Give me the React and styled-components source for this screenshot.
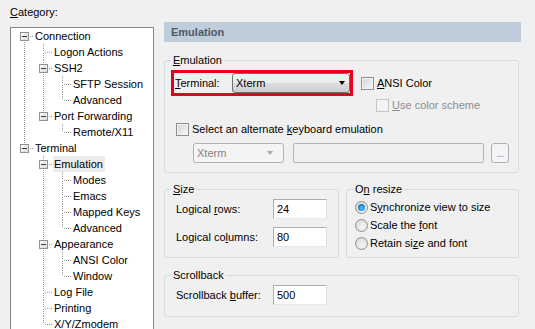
import React from "react";
import styled, { createGlobalStyle, css } from "styled-components";

const GlobalStyle = createGlobalStyle`
  html, body { margin: 0; padding: 0; }
  body {
    background: #f0f0f0;
    font-family: "Liberation Sans", Arial, sans-serif;
    font-size: 11px;
    color: #000;
    overflow: hidden;
  }
`;

const TREE = [
  { label: "Connection", level: 0, exp: true },
  { label: "Logon Actions", level: 1 },
  { label: "SSH2", level: 1, exp: true },
  { label: "SFTP Session", level: 2 },
  { label: "Advanced", level: 2 },
  { label: "Port Forwarding", level: 1, exp: true },
  { label: "Remote/X11", level: 2 },
  { label: "Terminal", level: 0, exp: true },
  { label: "Emulation", level: 1, exp: true, selected: true },
  { label: "Modes", level: 2 },
  { label: "Emacs", level: 2 },
  { label: "Mapped Keys", level: 2 },
  { label: "Advanced", level: 2 },
  { label: "Appearance", level: 1, exp: true },
  { label: "ANSI Color", level: 2 },
  { label: "Window", level: 2 },
  { label: "Log File", level: 1 },
  { label: "Printing", level: 1 },
  { label: "X/Y/Zmodem", level: 1 },
];

const Window = styled.div`
  display: flex;
  width: 535px;
  height: 329px;
  overflow: hidden;
`;

const Sidebar = styled.div`
  width: 144px;
  padding: 6px 0 0 10px;
  display: flex;
  flex-direction: column;
`;

const CategoryLabel = styled.div`
  line-height: 13px;
  margin-bottom: 8px;
`;

const TreeBox = styled.div`
  flex: none;
  height: 320px;
  box-sizing: border-box;
  border: 1px solid #828790;
  background: #fff;
  padding: 0 0 0 4px;
`;

const TreeRow = styled.div`
  display: flex;
  align-items: center;
  height: 16px;
`;

const TreeText = styled.span`
  line-height: 16px;
  padding: 0 2px 0 1px;
  white-space: nowrap;
  background: ${(p) => (p.$selected ? "#ececec" : "transparent")};
`;

const Cell = styled.svg`
  flex: none;
  display: block;
  width: 19px;
  height: 16px;
  shape-rendering: crispEdges;
`;

const Main = styled.div`
  width: 357px;
  margin-left: 10px;
  padding-top: 22px;
`;

const Header = styled.div`
  height: 20px;
  line-height: 20px;
  padding-left: 7px;
  background: #bfcddb;
  color: #4b5867;
  font-weight: bold;
`;

const Group = styled.fieldset`
  margin: ${(p) => p.$top}px 2px 0 0;
  padding: 0;
  min-width: 0;
  border: 1px solid #d5dbe0;
  border-radius: 3px;
  ${(p) => p.$flex && css`flex: ${p.$flex};`}
  ${(p) => p.$inRow && css`margin: 0;`}
`;

const Legend = styled.legend`
  margin-left: 6px;
  padding: 0 2px;
  line-height: 13px;
`;

const GroupBody = styled.div`
  padding: ${(p) => p.$pad};
`;

const Row = styled.div`
  display: flex;
  align-items: center;
  margin-top: ${(p) => p.$top || 0}px;
  padding-left: ${(p) => p.$left || 0}px;
  height: ${(p) => p.$h || 13}px;
`;

const SideBySide = styled.div`
  display: flex;
  gap: 7px;
  margin: 10px 2px 0 0;
`;

const RedBox = styled.div`
  display: flex;
  align-items: center;
  border: 3px solid #e4001b;
  height: 20px;
`;

const FieldLabel = styled.span`
  width: ${(p) => p.$w}px;
  padding-left: 1px;
  line-height: 13px;
  white-space: nowrap;
`;

const Combo = styled.div`
  box-sizing: border-box;
  width: ${(p) => p.$w}px;
  height: 20px;
  display: flex;
  align-items: center;
  justify-content: space-between;
  padding: 0 4px 0 3px;
  border-radius: 3px;
  ${(p) =>
    p.$disabled
      ? css`
          border: 1px solid #adb2b5;
          background: #f4f4f4;
          color: #838383;
        `
      : css`
          border: 1px solid #707070;
          background: linear-gradient(#f2f2f2 0%, #ebebeb 50%, #dddddd 50%, #cfcfcf 100%);
        `}
`;

const Arrow = styled.span`
  width: 0;
  height: 0;
  border-left: 3.5px solid transparent;
  border-right: 3.5px solid transparent;
  border-top: 4px solid ${(p) => (p.$disabled ? "#a8a8a8" : "#000")};
  margin-right: ${(p) => (p.$disabled ? 6 : 0)}px;
`;

const TextBox = styled.div`
  box-sizing: border-box;
  width: ${(p) => p.$w}px;
  height: 20px;
  margin-left: ${(p) => p.$left || 0}px;
  line-height: 18px;
  padding-left: 3px;
  border: 1px solid #abadb3;
  border-right-color: #dbdfe6;
  border-bottom-color: #e3e9ef;
  background: ${(p) => (p.$disabled ? "#f0f0f0" : "#fff")};
  ${(p) => p.$disabled && css`border: 1px solid #b5b5b5; border-radius: 2px;`}
`;

const SmallButton = styled.div`
  box-sizing: border-box;
  width: 18px;
  height: 20px;
  margin-left: 7px;
  border: 1px solid #adb2b5;
  border-radius: 3px;
  background: #f4f4f4;
  color: #7a8aa0;
  text-align: center;
  line-height: 20px;
  font-size: 10px;
  letter-spacing: -0.5px;
`;

const Box = styled.span`
  flex: none;
  box-sizing: border-box;
  width: 13px;
  height: 13px;
  margin-left: ${(p) => p.$left || 0}px;
  border: 1px solid ${(p) => (p.$disabled ? "#c5c5c5" : "#8e8f8f")};
  background: ${(p) =>
    p.$disabled ? "#f4f4f4" : "linear-gradient(135deg, #d2d2d2, #f8f8f8)"};
  box-shadow: inset 0 0 0 1px ${(p) => (p.$disabled ? "#f4f4f4" : "#f3f3f3")};
`;

const Radio = styled.span`
  flex: none;
  position: relative;
  box-sizing: border-box;
  width: 13px;
  height: 13px;
  border-radius: 50%;
  border: 1px solid #8e8f8f;
  background: radial-gradient(circle at 60% 65%, #f6f6f6 0%, #d4d4d4 100%);
  ${(p) =>
    p.$checked &&
    css`
      &::after {
        content: "";
        position: absolute;
        left: 2px;
        top: 2px;
        width: 7px;
        height: 7px;
        border-radius: 50%;
        background: radial-gradient(circle at 55% 60%, #63c8ff 0%, #1a86d1 55%, #0b4f8a 100%);
      }
    `}
`;

const OptionText = styled.span`
  margin-left: ${(p) => p.$gap || 3}px;
  line-height: 13px;
  white-space: nowrap;
  color: ${(p) => (p.$disabled ? "#8d8d8d" : "#000")};
`;

const RadioRow = styled.div`
  display: flex;
  align-items: center;
  height: 18px;
`;

const U = styled.span`
  text-decoration: underline;
`;

const DOT = "#9a9a9a";

function Guide({ on }) {
  return (
    <Cell viewBox="0 0 19 16">
      {on && <line x1="9.5" y1="0" x2="9.5" y2="16" stroke={DOT} strokeDasharray="1 1" />}
    </Cell>
  );
}

function Connector({ top, bottom, exp }) {
  return (
    <Cell viewBox="0 0 19 16">
      <defs>
        <linearGradient id="expg" x1="0" y1="0" x2="1" y2="1">
          <stop offset="0" stopColor="#ffffff" />
          <stop offset="1" stopColor="#d6d6d6" />
        </linearGradient>
      </defs>
      {top && <line x1="9.5" y1="0" x2="9.5" y2={exp ? 4 : 8} stroke={DOT} strokeDasharray="1 1" />}
      {bottom && <line x1="9.5" y1={exp ? 14 : 9} x2="9.5" y2="16" stroke={DOT} strokeDasharray="1 1" />}
      <line x1={exp ? 15 : 11} y1="8.5" x2="19" y2="8.5" stroke={DOT} strokeDasharray="1 1" />
      {exp && (
        <>
          <rect x="5.5" y="4.5" width="8" height="8" fill="url(#expg)" stroke="#919191" />
          <line x1="7" y1="8.5" x2="12" y2="8.5" stroke="#2e3a46" />
        </>
      )}
    </Cell>
  );
}

function Tree() {
  const flagged = TREE.map((n, i) => {
    let next = false;
    for (let j = i + 1; j < TREE.length; j++) {
      if (TREE[j].level < n.level) break;
      if (TREE[j].level === n.level) {
        next = true;
        break;
      }
    }
    return { ...n, next };
  });
  const stack = [];
  return (
    <TreeBox>
      {flagged.map((n, i) => {
        const guides = stack.slice(0, n.level);
        stack[n.level] = n.next;
        return (
          <TreeRow key={i}>
            {guides.map((g, k) => (
              <Guide key={k} on={g} />
            ))}
            <Connector top={!(n.level === 0 && i === 0)} bottom={n.next} exp={n.exp} />
            <TreeText $selected={n.selected}>{n.label}</TreeText>
          </TreeRow>
        );
      })}
    </TreeBox>
  );
}

export default function App() {
  return (
    <>
      <GlobalStyle />
      <Window>
        <Sidebar>
          <CategoryLabel>
            <U>C</U>ategory:
          </CategoryLabel>
          <Tree />
        </Sidebar>
        <Main>
          <Header>Emulation</Header>

          <Group $top={12}>
            <Legend>
              <U>E</U>mulation
            </Legend>
            <GroupBody $pad="3px 0 9px 6px">
              <Row $h={26}>
                <RedBox>
                  <FieldLabel $w={57}>
                    <U>T</U>erminal:
                  </FieldLabel>
                  <Combo $w={118}>
                    <span>Xterm</span>
                    <Arrow />
                  </Combo>
                </RedBox>
                <Box $left={8} />
                <OptionText>
                  <U>A</U>NSI Color
                </OptionText>
              </Row>
              <Row $top={3} $left={205}>
                <Box $disabled />
                <OptionText $disabled>
                  <U>U</U>se color scheme
                </OptionText>
              </Row>
              <Row $top={11} $left={5}>
                <Box />
                <OptionText>
                  Select an alternate <U>k</U>eyboard emulation
                </OptionText>
              </Row>
              <Row $top={7} $left={22} $h={20}>
                <Combo $w={91} $disabled>
                  <span>Xterm</span>
                  <Arrow $disabled />
                </Combo>
                <TextBox $w={191} $left={9} $disabled />
                <SmallButton>...</SmallButton>
              </Row>
            </GroupBody>
          </Group>

          <SideBySide>
            <Group $inRow $flex="0 0 173px">
              <Legend>
                <U>S</U>ize
              </Legend>
              <GroupBody $pad="3px 0 10px 10px">
                <Row $h={20}>
                  <FieldLabel $w={97}>
                    Logical <U>r</U>ows:
                  </FieldLabel>
                  <TextBox $w={54}>24</TextBox>
                </Row>
                <Row $h={20} $top={8}>
                  <FieldLabel $w={97}>
                    Logical co<U>l</U>umns:
                  </FieldLabel>
                  <TextBox $w={54}>80</TextBox>
                </Row>
              </GroupBody>
            </Group>
            <Group $inRow $flex="1 1 auto">
              <Legend>
                O<U>n</U> resize
              </Legend>
              <GroupBody $pad="2px 0 0 8px">
                <RadioRow>
                  <Radio $checked />
                  <OptionText $gap={2}>
                    S<U>y</U>nchronize view to size
                  </OptionText>
                </RadioRow>
                <RadioRow>
                  <Radio />
                  <OptionText $gap={2}>
                    Scale the <U>f</U>ont
                  </OptionText>
                </RadioRow>
                <RadioRow>
                  <Radio />
                  <OptionText $gap={2}>
                    Retain si<U>z</U>e and font
                  </OptionText>
                </RadioRow>
              </GroupBody>
            </Group>
          </SideBySide>

          <Group $top={11}>
            <Legend>Scrollback</Legend>
            <GroupBody $pad="3px 0 11px 10px">
              <Row $h={20}>
                <FieldLabel $w={97}>
                  Scrollback <U>b</U>uffer:
                </FieldLabel>
                <TextBox $w={54}>500</TextBox>
              </Row>
            </GroupBody>
          </Group>
        </Main>
      </Window>
    </>
  );
}
